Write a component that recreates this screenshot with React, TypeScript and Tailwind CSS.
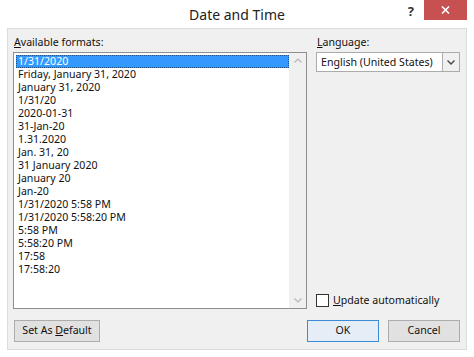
import React from "react";

const items = [
  "1/31/2020",
  "Friday, January 31, 2020",
  "January 31, 2020",
  "1/31/20",
  "2020-01-31",
  "31-Jan-20",
  "1.31.2020",
  "Jan. 31, 20",
  "31 January 2020",
  "January 20",
  "Jan-20",
  "1/31/2020 5:58 PM",
  "1/31/2020 5:58:20 PM",
  "5:58 PM",
  "5:58:20 PM",
  "17:58",
  "17:58:20",
];

export default function App() {
  return (
    <div
      className="w-[474px] h-[357px] bg-white flex flex-col text-[#111] overflow-hidden"
      style={{ fontFamily: '"Noto Sans", "Open Sans", sans-serif' }}
    >
      {/* Title bar */}
      <div className="h-[28px] grid grid-cols-[1fr_auto_1fr] items-start">
        <div />
        <div className="pt-[5px] text-[14px] leading-[20px] text-[#222]">Date and Time</div>
        <div className="flex justify-end items-start">
          <div className="mt-[3px] mr-[10px] text-[13px] font-bold leading-[16px] text-[#333]">?</div>
          <div className="w-[43px] h-[20px] mr-[7px] bg-[#c75050] flex items-center justify-center">
            <svg width="9" height="8" viewBox="0 0 9 8">
              <path d="M1 0.5 L8 7.5 M8 0.5 L1 7.5" stroke="#fff" strokeWidth="1.6" />
            </svg>
          </div>
        </div>
      </div>

      {/* Panel */}
      <div className="mx-[7px] h-[322px] border border-[#dcdcdc] bg-[#f0f0f0] flex flex-col px-[5px] pt-[5px] text-[10.6px]">
        <div className="flex gap-[9px]">
          {/* Left column */}
          <div className="flex flex-col">
            <div className="h-[18px] leading-[16px] pl-[1px]">
              <span className="underline">A</span>vailable formats:
            </div>
            <div className="w-[294px] h-[257px] border border-[#8f8f8f] bg-white flex">
              <div className="flex-1 pt-[2px] pl-[2px]">
                {items.map((t, i) =>
                  i === 0 ? (
                    <div
                      key={t}
                      className="h-[13px] leading-[11px] bg-[#3399ff] text-white pl-[1px] border border-dotted border-[#1b4f87]"
                    >
                      {t}
                    </div>
                  ) : (
                    <div key={t} className="h-[13px] leading-[13px] pl-[2px] whitespace-nowrap">
                      {t}
                    </div>
                  )
                )}
              </div>
              <div className="w-[17px] bg-[#f0f0f0] flex flex-col justify-between items-center py-[5px]">
                <svg width="8" height="5" viewBox="0 0 8 5">
                  <path d="M0.5 4.5 L4 1 L7.5 4.5" stroke="#b5b5b5" strokeWidth="1.2" fill="none" />
                </svg>
                <svg width="8" height="5" viewBox="0 0 8 5">
                  <path d="M0.5 0.5 L4 4 L7.5 0.5" stroke="#b5b5b5" strokeWidth="1.2" fill="none" />
                </svg>
              </div>
            </div>
          </div>

          {/* Right column */}
          <div className="flex flex-col flex-1 pr-[1px]">
            <div className="h-[18px] leading-[16px] pl-[1px]">
              <span className="underline">L</span>anguage:
            </div>
            <div className="w-[144px] h-[20px] border border-[#acacac] bg-white flex">
              <div className="flex-1 pl-[4px] leading-[18px] whitespace-nowrap">English (United States)</div>
              <div className="w-[17px] border-l border-[#acacac] bg-[#f0f0f0] flex items-center justify-center">
                <svg width="8" height="5" viewBox="0 0 8 5">
                  <path d="M0.5 0.5 L4 4 L7.5 0.5" stroke="#444" strokeWidth="1.3" fill="none" />
                </svg>
              </div>
            </div>
            <div className="flex-1" />
            <div className="flex items-center gap-[4px] mb-[1px]">
              <div className="w-[13px] h-[13px] border border-[#333] bg-white" />
              <div className="leading-[16px]">
                <span className="underline">U</span>pdate automatically
              </div>
            </div>
          </div>
        </div>

        {/* Buttons */}
        <div className="flex mt-[11px] pl-[1px] pr-[1px]">
          <div className="w-[86px] h-[22px] border border-[#adadad] bg-[#e1e1e1] flex items-center justify-center">
            <span>
              Set As <span className="underline">D</span>efault
            </span>
          </div>
          <div className="flex-1" />
          <div className="w-[72px] h-[22px] border border-[#3c8ad8] bg-[#e5eef7] flex items-center justify-center">
            OK
          </div>
          <div className="w-[72px] h-[22px] ml-[9px] border border-[#adadad] bg-[#e1e1e1] flex items-center justify-center">
            Cancel
          </div>
        </div>
      </div>
    </div>
  );
}
